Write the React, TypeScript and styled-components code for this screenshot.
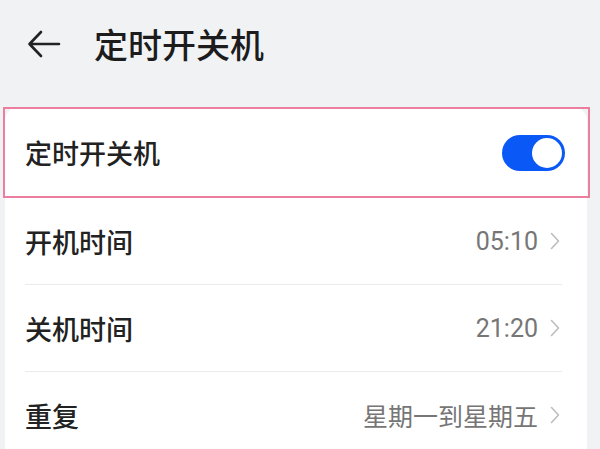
import styled, { createGlobalStyle } from "styled-components";

const GlobalStyle = createGlobalStyle`
  html, body {
    margin: 0;
    padding: 0;
    background: #f1f2f4;
    font-family: "Noto Sans CJK SC", "Noto Sans", Roboto, sans-serif;
  }
`;

const Page = styled.div`
  width: 600px;
  height: 449px;
  overflow: hidden;
  background: #f1f2f4;
`;

const Header = styled.div`
  height: 87px;
  display: flex;
  align-items: center;
  padding-left: 27px;
  gap: 33px;
  margin-bottom: 20px;
`;

const Title = styled.h1`
  margin: 0;
  font-size: 34px;
  font-weight: 500;
  color: #1c1c1c;
`;

const Card = styled.div`
  margin: 0 13px 0 5px;
  background: #fff;
  border-radius: 14px 14px 0 0;
  height: 342px;
`;

const HighlightRow = styled.div`
  height: 87px;
  margin: 0 -3px 0 -2px;
  border: 2px solid #ec7fa0;
  display: flex;
  align-items: center;
  justify-content: space-between;
  padding: 0 23px 0 20px;
`;

const Row = styled.div<{ $last?: boolean }>`
  height: 86px;
  margin: 0 25px 0 20px;
  display: flex;
  align-items: center;
  justify-content: space-between;
  border-bottom: ${(p) => (p.$last ? "none" : "1px solid #ebebeb")};
`;

const Label = styled.span`
  font-size: 27px;
  font-weight: 500;
  color: #222;
`;

const Value = styled.span`
  display: flex;
  align-items: center;
  gap: 12px;
  padding-right: 2px;
  font-size: 25px;
  color: #767676;
  font-family: Roboto, "Noto Sans CJK SC", sans-serif;
`;

const Toggle = styled.div`
  width: 63px;
  height: 36px;
  border-radius: 18px;
  background: #0a59f7;
  display: flex;
  align-items: center;
  justify-content: flex-end;
  padding: 0 3px;
  box-sizing: border-box;
`;

const Knob = styled.div`
  width: 30px;
  height: 30px;
  border-radius: 50%;
  background: #fff;
`;

const Chevron = () => (
  <svg width="10" height="18" viewBox="0 0 10 18">
    <path d="M1.5 1.5 L8.5 9 L1.5 16.5" fill="none" stroke="#bdbdbd" strokeWidth="1.6" strokeLinecap="round" strokeLinejoin="round" />
  </svg>
);

const BackArrow = () => (
  <svg width="34" height="28" viewBox="0 0 34 28">
    <path d="M32 14 H3 M14 2 L2.5 14 L14 26" fill="none" stroke="#222" strokeWidth="2.6" strokeLinecap="round" strokeLinejoin="round" />
  </svg>
);

const items = [
  { label: "开机时间", value: "05:10" },
  { label: "关机时间", value: "21:20" },
  { label: "重复", value: "星期一到星期五" },
];

export default function App() {
  return (
    <Page>
      <GlobalStyle />
      <Header>
        <BackArrow />
        <Title>定时开关机</Title>
      </Header>
      <Card>
        <HighlightRow>
          <Label>定时开关机</Label>
          <Toggle>
            <Knob />
          </Toggle>
        </HighlightRow>
        {items.map((item, i) => (
          <Row key={item.label} $last={i === items.length - 1}>
            <Label>{item.label}</Label>
            <Value>
              {item.value}
              <Chevron />
            </Value>
          </Row>
        ))}
      </Card>
    </Page>
  );
}
